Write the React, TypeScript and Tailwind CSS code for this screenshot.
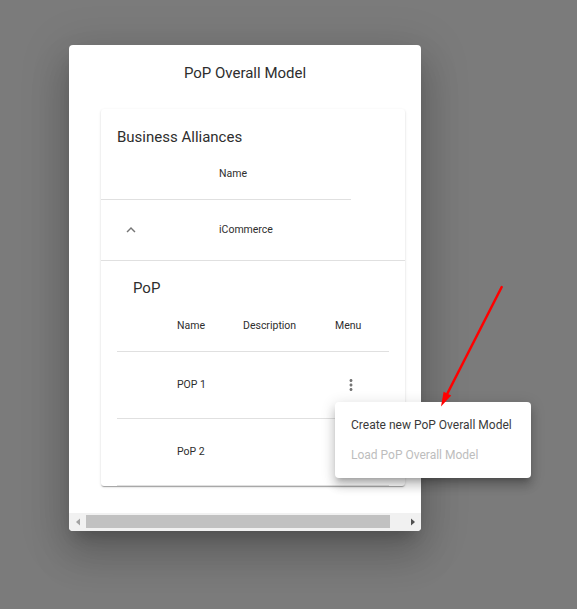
import React from "react";

const MoreVert = () => (
  <svg width="18" height="18" viewBox="0 0 24 24" fill="#757575">
    <path d="M12 8c1.1 0 2-.9 2-2s-.9-2-2-2-2 .9-2 2 .9 2 2 2zm0 2c-1.1 0-2 .9-2 2s.9 2 2 2 2-.9 2-2-.9-2-2-2zm0 6c-1.1 0-2 .9-2 2s.9 2 2 2 2-.9 2-2-.9-2-2-2z" />
  </svg>
);

const ArrowUp = () => (
  <svg width="18" height="18" viewBox="0 0 24 24" fill="#757575">
    <path d="M7.41 15.41L12 10.83l4.59 4.58L18 14l-6-6-6 6z" />
  </svg>
);

export default function App() {
  return (
    <div className="relative w-[577px] h-[609px] bg-[#7b7b7b] overflow-hidden font-['Roboto',sans-serif] text-[#2e2e2e]">
      <div className="pt-[45px] pl-[69px]">
        <div className="w-[352px] bg-white rounded-[4px] overflow-hidden flex flex-col shadow-[0px_11px_15px_-7px_rgba(0,0,0,0.2),0px_24px_38px_3px_rgba(0,0,0,0.14),0px_9px_46px_8px_rgba(0,0,0,0.12)]">
          <div className="pt-4 text-center text-[15px] leading-[24px]">PoP Overall Model</div>
          <div className="pt-6 pl-8 pb-[27px]">
            <div className="w-[304px] bg-white rounded-[3px] overflow-hidden shadow-[0px_2px_1px_-1px_rgba(0,0,0,0.2),0px_1px_1px_0px_rgba(0,0,0,0.14),0px_1px_3px_0px_rgba(0,0,0,0.12)]">
              <div className="pl-4 pt-4 text-[15px] leading-[24px]">Business Alliances</div>
              <div className="flex items-center h-[51px] w-[250px] border-b border-[#e0e0e0] text-[10.5px]">
                <div className="w-[118px]" />
                <div>Name</div>
              </div>
              <div className="flex items-center h-[61px] border-b border-[#e0e0e0] text-[10.5px]">
                <div className="ml-[21px] w-[18px] h-[18px] flex">
                  <ArrowUp />
                </div>
                <div className="ml-[79px]">iCommerce</div>
              </div>
              <div className="pl-8 pt-[15px] text-[15px] leading-[24px]">PoP</div>
              <div className="ml-4 w-[272px] text-[10.5px]">
                <div className="flex items-center h-[52px] border-b border-[#e0e0e0]">
                  <div className="w-[60px]" />
                  <div className="w-[66px]">Name</div>
                  <div className="w-[92px]">Description</div>
                  <div>Menu</div>
                </div>
                <div className="flex items-center h-[67px] border-b border-[#e0e0e0]">
                  <div className="w-[60px]" />
                  <div className="w-[66px]">POP 1</div>
                  <div className="w-[92px]" />
                  <div className="ml-[7px] w-[18px] h-[18px] flex">
                    <MoreVert />
                  </div>
                </div>
                <div className="flex items-center h-[67px] border-b border-[#e0e0e0]">
                  <div className="w-[60px]" />
                  <div className="w-[66px]">PoP 2</div>
                </div>
              </div>
            </div>
          </div>
          <div className="flex h-[18px] bg-[#f1f1f1]">
            <div className="w-[17px] flex items-center justify-center">
              <svg width="8" height="8" viewBox="0 0 8 8">
                <polygon points="6,0.5 6,7.5 2,4" fill="#a3a3a3" />
              </svg>
            </div>
            <div className="w-[304px] pt-[2px]">
              <div className="h-[13px] bg-[#c1c1c1]" />
            </div>
            <div className="flex-1" />
            <div className="w-[17px] flex items-center justify-center">
              <svg width="8" height="8" viewBox="0 0 8 8">
                <polygon points="2,0.5 2,7.5 6,4" fill="#505050" />
              </svg>
            </div>
          </div>
        </div>
      </div>

      <div className="absolute left-[335px] top-[402px] w-[196px] bg-white rounded-[4px] py-2 text-[12px] shadow-[0px_5px_5px_-3px_rgba(0,0,0,0.2),0px_8px_10px_1px_rgba(0,0,0,0.14),0px_3px_14px_2px_rgba(0,0,0,0.12)]">
        <div className="h-[30px] px-4 flex items-center text-[#3a3a3a]">Create new PoP Overall Model</div>
        <div className="h-[30px] px-4 flex items-center text-[#bdbdbd]">Load PoP Overall Model</div>
      </div>

      <svg className="absolute left-0 top-0 pointer-events-none" width="577" height="609">
        <line x1="501.7" y1="287" x2="447.4" y2="393.5" stroke="#ff0000" strokeWidth="2.5" strokeLinecap="round" />
        <polygon points="441,406.5 451.2,395.6 443.6,391.7" fill="#ff0000" />
      </svg>
    </div>
  );
}
